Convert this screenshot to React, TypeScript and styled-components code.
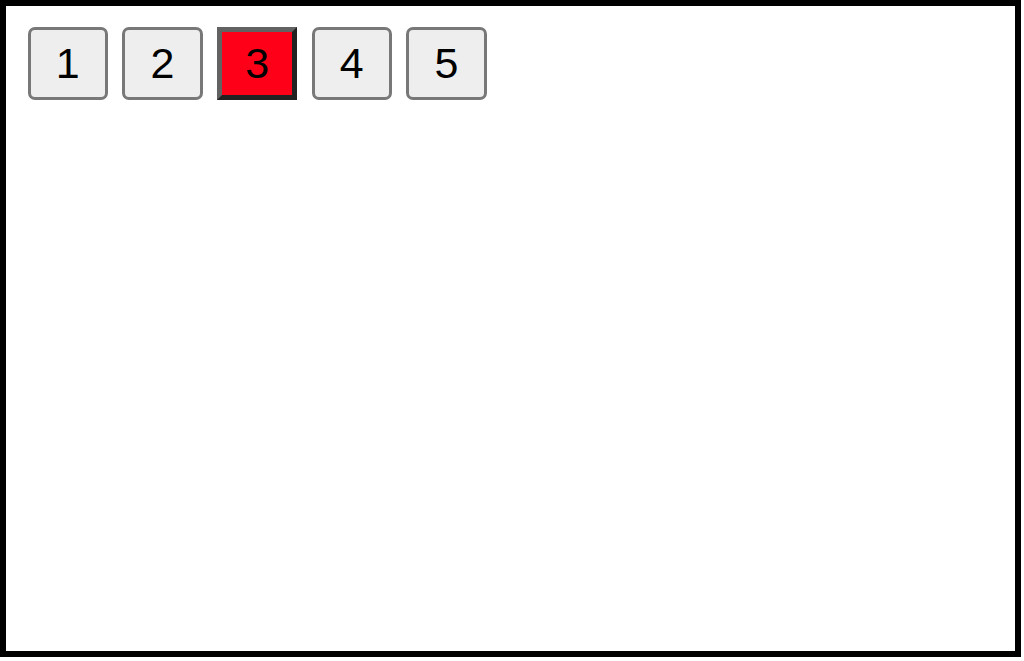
import { FC, useState } from "react";
import styled, { createGlobalStyle } from "styled-components";

const GlobalStyle = createGlobalStyle`
  html, body {
    margin: 0;
    padding: 0;
    background: #ffffff;
  }
`;

const pages = [1, 2, 3, 4, 5];

const App: FC = () => {
  const [active, setActive] = useState(3);

  return (
    <>
      <GlobalStyle />
      <Frame>
        <Pager>
          {pages.map((page) => (
            <PageButton
              key={page}
              $active={page === active}
              onClick={() => setActive(page)}
            >
              {page}
            </PageButton>
          ))}
        </Pager>
      </Frame>
    </>
  );
};

export default App;

const Frame = styled.div`
  box-sizing: border-box;
  width: 1021px;
  height: 657px;
  border: 6px solid #000000;
  background: #ffffff;
  padding: 21px 21.5px;
`;

const Pager = styled.div`
  display: flex;
  flex-direction: row;
  gap: 14.2px;
`;

const PageButton = styled.button<{ $active: boolean }>`
  box-sizing: border-box;
  width: 80.5px;
  height: 73px;
  padding: 0;
  display: flex;
  align-items: center;
  justify-content: center;
  font-family: "Liberation Sans", Arial, sans-serif;
  font-size: 43px;
  color: #000000;
  cursor: pointer;
  background: ${(p) => (p.$active ? "#ff0019" : "#eeeeee")};
  border-style: solid;
  border-width: ${(p) => (p.$active ? "5px" : "3px")};
  border-color: ${(p) => (p.$active ? "#626262 #222222 #222222 #626262" : "#787878")};
  border-radius: ${(p) => (p.$active ? "0" : "7px")};
`;
